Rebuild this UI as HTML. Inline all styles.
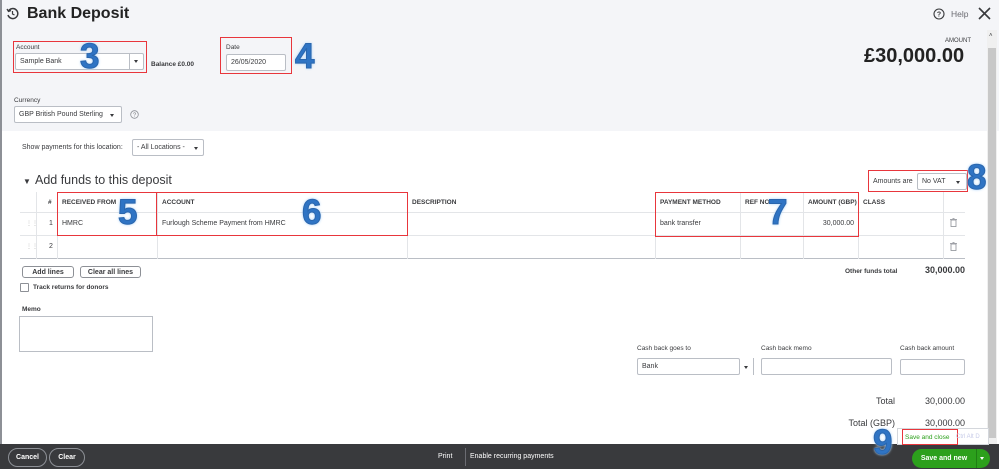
<!DOCTYPE html>
<html><head><meta charset="utf-8">
<style>
*{box-sizing:border-box;margin:0;padding:0}
body{width:999px;height:469px;overflow:hidden;position:relative;background:#fff;font-family:"Liberation Sans",sans-serif;color:#393a3d;font-size:7px}
.a{position:absolute}
.hdr{left:0;top:0;width:999px;height:131px;background:#f4f5f8}
.inp{position:absolute;background:#fff;border:1px solid #babec5;border-radius:2px;font-size:7px;padding-left:4px;display:flex;align-items:center}
.red{position:absolute;border:1px solid #e8363c}
.big{position:absolute;font-size:35px;font-weight:bold;color:#2f74c4;text-shadow:0 0 2px #cfe6ff,0 0 3px #9cc9f5;font-family:"Liberation Sans",sans-serif;-webkit-text-stroke:1px #2a66ad}
.th{position:absolute;top:192px;height:20px;font-size:6.5px;font-weight:bold;display:flex;align-items:center;padding-left:4px}
.vl{position:absolute;width:1px;background:#e3e5e8;top:192px;height:67px}
.hl{position:absolute;height:1px;background:#e3e5e8;left:20px;width:945px}
.btn{position:absolute;border:1px solid #8d9096;border-radius:3px;font-size:7px;font-weight:bold;display:flex;align-items:center;justify-content:center;background:#fff}
.lbl{position:absolute;font-size:6.5px}
.caret{position:absolute;width:0;height:0;border-left:2.5px solid transparent;border-right:2.5px solid transparent;border-top:3px solid #393a3d}
</style></head><body>
<div class="a hdr"></div>
<div class="a" style="left:0;top:0;width:2px;height:444px;background:#8d9096"></div>
<div class="a" style="left:987px;top:30px;width:10px;height:414px;background:#f0f0f0"></div>
<div class="a" style="left:988px;top:48px;width:8px;height:390px;background:#c8c8c8"></div>
<div class="a" style="left:989px;top:33px;font-size:6px">˄</div>
<svg class="a" style="left:6px;top:7px" width="13" height="13" viewBox="0 0 13 13"><path d="M2.5 4 A5 5 0 1 1 2 8" fill="none" stroke="#393a3d" stroke-width="1.5"/><path d="M1 2 L2.5 4.5 L5 3.5" fill="none" stroke="#393a3d" stroke-width="1.3"/><path d="M6.5 4 V7 L8.5 8" fill="none" stroke="#393a3d" stroke-width="1.2"/></svg>
<div class="a" style="left:27px;top:5px;font-size:16px;font-weight:bold;color:#222">Bank Deposit</div>
<svg class="a" style="left:933px;top:8px" width="12" height="12"><circle cx="6" cy="6" r="5" fill="none" stroke="#393a3d" stroke-width="1.1"/><text x="6" y="8.5" font-size="7" text-anchor="middle" font-family="Liberation Sans" font-weight="bold" fill="#393a3d">?</text></svg>
<div class="a" style="left:951px;top:9px;font-size:8.5px;color:#6b6c72">Help</div>
<svg class="a" style="left:977px;top:6px" width="15" height="15"><path d="M2 2L13 13M13 2L2 13" stroke="#393a3d" stroke-width="1.6"/></svg>
<div class="a" style="left:945px;top:38px;font-size:6px">AMOUNT</div>
<div class="a" style="left:864px;top:45px;font-size:20px;font-weight:bold;color:#222">£30,000.00</div>

<div class="red" style="left:13px;top:41px;width:134px;height:32px"></div>
<div class="lbl" style="left:16px;top:44px">Account</div>
<div class="inp" style="left:15px;top:53px;width:129px;height:17px">Sample Bank</div>
<div class="a" style="left:129px;top:54px;width:1px;height:15px;background:#babec5"></div>
<div class="caret" style="left:134px;top:60px"></div>
<div class="big" style="left:80px;top:37px">3</div>
<div class="a" style="left:151px;top:61px;font-size:6.5px;font-weight:bold">Balance £0.00</div>
<div class="red" style="left:220px;top:37px;width:72px;height:37px"></div>
<div class="lbl" style="left:226px;top:44px">Date</div>
<div class="inp" style="left:226px;top:54px;width:60px;height:17px">26/05/2020</div>
<div class="big" style="left:295px;top:37px">4</div>

<div class="lbl" style="left:14px;top:97px">Currency</div>
<div class="inp" style="left:14px;top:106px;width:108px;height:17px">GBP British Pound Sterling</div>
<div class="caret" style="left:110px;top:114px"></div>
<svg class="a" style="left:130px;top:110px" width="9" height="9"><circle cx="4.5" cy="4.5" r="3.8" fill="none" stroke="#8d9096" stroke-width=".8"/><text x="4.5" y="6.5" font-size="5.5" text-anchor="middle" font-family="Liberation Sans" fill="#6b6c72">?</text></svg>

<div class="a" style="left:22px;top:144px;font-size:7px">Show payments for this location:</div>
<div class="inp" style="left:132px;top:139px;width:72px;height:17px">- All Locations -</div>
<div class="caret" style="left:194px;top:147px"></div>

<div class="a" style="left:23px;top:177px;font-size:8px">▼</div>
<div class="a" style="left:35px;top:173px;font-size:12.5px">Add funds to this deposit</div>
<div class="red" style="left:868px;top:170px;width:100px;height:22px"></div>
<div class="a" style="left:873px;top:178px;font-size:7px">Amounts are</div>
<div class="inp" style="left:917px;top:173px;width:50px;height:17px">No VAT</div>
<div class="caret" style="left:956px;top:181px"></div>
<div class="big" style="left:967px;top:158px">8</div>

<div class="hl" style="top:212px"></div>
<div class="hl" style="top:235px"></div>
<div class="hl" style="top:258px;background:#babec5"></div>
<div class="vl" style="left:36px"></div><div class="vl" style="left:57px"></div><div class="vl" style="left:157px"></div><div class="vl" style="left:407px"></div><div class="vl" style="left:655px"></div><div class="vl" style="left:740px"></div><div class="vl" style="left:803px"></div><div class="vl" style="left:858px"></div><div class="vl" style="left:943px"></div>
<div class="th" style="left:44px">#</div>
<div class="th" style="left:58px">RECEIVED FROM</div>
<div class="th" style="left:158px">ACCOUNT</div>
<div class="th" style="left:408px">DESCRIPTION</div>
<div class="th" style="left:656px">PAYMENT METHOD</div>
<div class="th" style="left:741px">REF NO.</div>
<div class="th" style="left:804px">AMOUNT (GBP)</div>
<div class="th" style="left:859px">CLASS</div>
<div class="a" style="left:26px;top:220px;font-size:6px;color:#bbb">⋮⋮</div>
<div class="a" style="left:26px;top:243px;font-size:6px;color:#bbb">⋮⋮</div>
<div class="a" style="left:49px;top:220px">1</div>
<div class="a" style="left:49px;top:243px">2</div>
<div class="a" style="left:62px;top:220px">HMRC</div>
<div class="a" style="left:162px;top:220px">Furlough Scheme Payment from HMRC</div>
<div class="a" style="left:660px;top:220px">bank transfer</div>
<div class="a" style="left:800px;top:220px;width:54px;text-align:right">30,000.00</div>
<svg class="a" style="left:950px;top:218px" width="7" height="9"><rect x="1" y="2" width="5" height="6.5" fill="none" stroke="#8d9096" stroke-width=".8"/><path d="M0 1.5H7M2.5 0.5H4.5" stroke="#8d9096" stroke-width=".8"/></svg>
<svg class="a" style="left:950px;top:242px" width="7" height="9"><rect x="1" y="2" width="5" height="6.5" fill="none" stroke="#8d9096" stroke-width=".8"/><path d="M0 1.5H7M2.5 0.5H4.5" stroke="#8d9096" stroke-width=".8"/></svg>
<div class="red" style="left:57px;top:192px;width:351px;height:44px"></div>
<div class="a" style="left:156px;top:192px;width:1px;height:44px;background:#e8363c"></div>
<div class="red" style="left:655px;top:192px;width:204px;height:45px"></div>
<div class="big" style="left:118px;top:193px">5</div>
<div class="big" style="left:302px;top:193px">6</div>
<div class="big" style="left:768px;top:193px">7</div>

<div class="btn" style="left:22px;top:266px;width:52px;height:12px">Add lines</div>
<div class="btn" style="left:80px;top:266px;width:61px;height:12px">Clear all lines</div>
<div class="a" style="left:20px;top:283px;width:9px;height:9px;border:1px solid #8d9096;border-radius:1px"></div>
<div class="a" style="left:33px;top:284px;font-size:6.5px;font-weight:bold">Track returns for donors</div>
<div class="a" style="left:845px;top:268px;font-size:6.5px;font-weight:bold">Other funds total</div>
<div class="a" style="left:900px;top:265px;width:65px;text-align:right;font-size:9px;font-weight:bold">30,000.00</div>

<div class="lbl" style="left:22px;top:306px;font-weight:bold">Memo</div>
<div class="a" style="left:19px;top:316px;width:134px;height:36px;border:1px solid #babec5"></div>

<div class="lbl" style="left:637px;top:345px">Cash back goes to</div>
<div class="lbl" style="left:761px;top:345px">Cash back memo</div>
<div class="lbl" style="left:900px;top:345px">Cash back amount</div>
<div class="inp" style="left:637px;top:358px;width:103px;height:17px">Bank</div>
<div class="caret" style="left:744px;top:366px"></div>
<div class="a" style="left:753px;top:358px;width:1px;height:17px;background:#babec5"></div>
<div class="inp" style="left:761px;top:358px;width:131px;height:17px"></div>
<div class="inp" style="left:900px;top:359px;width:65px;height:16px"></div>

<div class="a" style="left:870px;top:396px;width:25px;text-align:right;font-size:9px">Total</div>
<div class="a" style="left:900px;top:396px;width:65px;text-align:right;font-size:9px">30,000.00</div>
<div class="a" style="left:840px;top:418px;width:55px;text-align:right;font-size:9px">Total (GBP)</div>
<div class="a" style="left:900px;top:418px;width:65px;text-align:right;font-size:9px">30,000.00</div>

<div class="a" style="left:0;top:444px;width:999px;height:25px;background:#393a3d"></div>
<div class="a" style="left:8px;top:448px;width:39px;height:19px;border:1px solid #8d9096;border-radius:10px;color:#fff;font-size:7px;font-weight:bold;display:flex;align-items:center;justify-content:center">Cancel</div>
<div class="a" style="left:49px;top:448px;width:36px;height:19px;border:1px solid #8d9096;border-radius:10px;color:#fff;font-size:7px;font-weight:bold;display:flex;align-items:center;justify-content:center">Clear</div>
<div class="a" style="left:438px;top:453px;color:#fff;font-size:7px">Print</div>
<div class="a" style="left:465px;top:448px;width:1px;height:18px;background:#6b6c72"></div>
<div class="a" style="left:470px;top:453px;color:#fff;font-size:7px">Enable recurring payments</div>
<div class="a" style="left:912px;top:449px;width:78px;height:19px;background:#2ca01c;border-radius:10px"></div>
<div class="a" style="left:912px;top:449px;width:64px;height:19px;color:#fff;font-size:7px;font-weight:bold;display:flex;align-items:center;justify-content:center">Save and new</div>
<div class="a" style="left:976px;top:449px;width:1px;height:19px;background:#1f7f14"></div>
<div class="caret" style="left:980px;top:457px;border-top-color:#fff"></div>
<div class="a" style="left:897px;top:428px;width:92px;height:17px;background:#fff;border:1px solid #d4d7dc"></div>
<div class="red" style="left:902px;top:429px;width:56px;height:16px"></div>
<div class="a" style="left:905px;top:434px;font-size:6.5px;color:#2ca01c">Save and close</div>
<div class="a" style="left:956px;top:434px;font-size:6px;color:#c7cbe8">Ctrl Alt D</div>
<div class="big" style="left:873px;top:423px">9</div>
</body></html>
